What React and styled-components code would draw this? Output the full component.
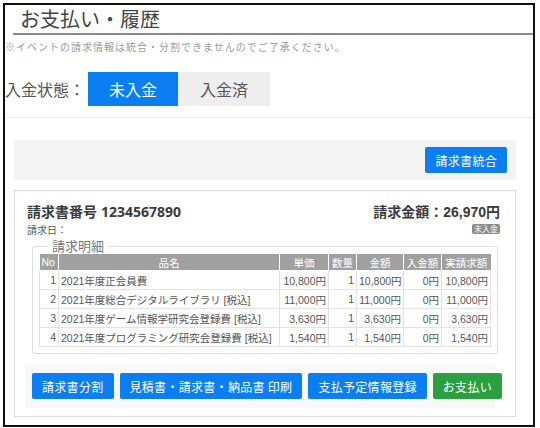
import styled, { createGlobalStyle } from "styled-components";

const GlobalStyle = createGlobalStyle`
  body {
    margin: 0;
    background: #ffffff;
    font-family: "Noto Sans CJK JP", sans-serif;
    color: #444;
  }
`;

const Frame = styled.div`
  margin: 3px 0 0 3px;
  width: 528px;
  border: 2px solid #111;
  background: #fff;
`;

const Title = styled.h1`
  margin: 0 0 0 8px;
  padding-left: 7px;
  height: 28px;
  line-height: 28px;
  font-size: 20px;
  font-weight: 400;
  color: #444;
  border-bottom: 2px solid #8a8a8a;
`;

const Note = styled.p`
  margin: 5px 0 0 0;
  font-size: 10px;
  line-height: 14px;
  letter-spacing: 1px;
  color: #9a9a9a;
`;

const Filter = styled.div`
  display: flex;
  align-items: center;
  margin: 18px 0 0 0;
  padding-bottom: 11px;
  border-bottom: 1px solid #ececec;
`;

const FilterLabel = styled.span`
  font-size: 16px;
  color: #555;
  width: 83px;
  white-space: nowrap;
`;

const Tab = styled.button`
  border: none;
  height: 34px;
  padding: 0;
  width: ${(p) => p.$w}px;
  font-family: inherit;
  font-size: 16px;
  background: ${(p) => (p.$active ? "#0b7ef2" : "#eeeeee")};
  color: ${(p) => (p.$active ? "#fff" : "#555")};
`;

const Content = styled.div`
  padding: 0 17px 0 9px;
`;

const Toolbar = styled.div`
  margin-top: 22px;
  height: 40px;
  background: #f3f3f3;
  display: flex;
  align-items: center;
  justify-content: flex-end;
  padding-right: 9px;
`;

const Button = styled.button`
  border: none;
  border-radius: 2px;
  height: 26px;
  padding: 0 10px;
  font-family: inherit;
  font-size: 12px;
  letter-spacing: 0.3px;
  color: #fff;
  background: ${(p) => (p.$variant === "green" ? "#2a9f3f" : "#0b7ef2")};
  white-space: nowrap;
`;

const Card = styled.div`
  margin: 10px 0 8px 0;
  border: 1px solid #dcdcdc;
  padding: 11px 15px 8px 12px;
`;

const HeadRow = styled.div`
  display: flex;
  justify-content: space-between;
  align-items: center;
  height: 18px;
  font-size: 14px;
  font-weight: 700;
  color: #3a3a3a;
`;

const InvoiceNo = styled.span`
  font-family: "Open Sans", "Noto Sans CJK JP", sans-serif;
  font-weight: 700;
  font-size: 14px;
  margin-left: 4px;
`;

const Amount = styled.span`
  font-family: "Liberation Sans", "Noto Sans CJK JP", sans-serif;
  font-weight: 700;
`;

const SubRow = styled.div`
  display: flex;
  justify-content: space-between;
  align-items: center;
  margin-top: 2px;
  height: 14px;
  font-size: 10px;
  color: #555;
`;

const Badge = styled.span`
  background: #8c8c8c;
  color: #fff;
  font-size: 8px;
  line-height: 10px;
  padding: 0 2px;
  border-radius: 2px;
`;

const Fieldset = styled.fieldset`
  margin: 2px 4px 0 5px;
  padding: 0 6px 6px 6px;
  border: 1px solid #dedede;
  border-radius: 3px;
`;

const Legend = styled.legend`
  margin-left: 9px;
  padding: 0 4px;
  font-size: 13px;
  line-height: 16px;
  color: #777;
`;

const Table = styled.table`
  width: 451px;
  border-collapse: collapse;
  table-layout: fixed;
  font-family: "Liberation Sans", "Noto Sans CJK JP", sans-serif;
  font-size: 10.5px;
  color: #555;
`;

const Th = styled.th`
  background: #a0a0a0;
  color: #fff;
  font-weight: 400;
  height: 16px;
  padding: 0 2px;
  text-align: ${(p) => p.$align || "center"};
  border: 1px solid #fff;
  border-top: none;
  &:first-child {
    border-left: none;
  }
  &:last-child {
    border-right: none;
  }
`;

const Td = styled.td`
  height: 18px;
  padding: 0 2px;
  text-align: ${(p) => p.$align || "right"};
  border: 1px solid #e2e2e2;
  white-space: nowrap;
  overflow: hidden;
`;

const Actions = styled.div`
  margin: 10px 5px 0 -2px;
  padding: 9px 7px;
  background: #f8f8f8;
  display: flex;
  gap: 6px;
`;

const columns = [
  { label: "No", w: 19, align: "left" },
  { label: "品名", w: 221 },
  { label: "単価", w: 49 },
  { label: "数量", w: 28 },
  { label: "金額", w: 47 },
  { label: "入金額", w: 38 },
  { label: "実請求額", w: 49 },
];

const rows = [
  ["1", "2021年度正会員費", "10,800円", "1", "10,800円", "0円", "10,800円"],
  ["2", "2021年度総合デジタルライブラリ [税込]", "11,000円", "1", "11,000円", "0円", "11,000円"],
  ["3", "2021年度ゲーム情報学研究会登録費 [税込]", "3,630円", "1", "3,630円", "0円", "3,630円"],
  ["4", "2021年度プログラミング研究会登録費 [税込]", "1,540円", "1", "1,540円", "0円", "1,540円"],
];

export default function App() {
  return (
    <>
      <GlobalStyle />
      <Frame>
        <Title>お支払い・履歴</Title>
        <Note>※イベントの請求情報は統合・分割できませんのでご了承ください。</Note>
        <Filter>
          <FilterLabel>入金状態：</FilterLabel>
          <Tab $active $w={90}>未入金</Tab>
          <Tab $w={92}>入金済</Tab>
        </Filter>
        <Content>
          <Toolbar>
            <Button>請求書統合</Button>
          </Toolbar>
          <Card>
            <HeadRow>
              <span>
                請求書番号<InvoiceNo>1234567890</InvoiceNo>
              </span>
              <span>
                請求金額：<Amount>26,970</Amount>円
              </span>
            </HeadRow>
            <SubRow>
              <span>請求日：</span>
              <Badge>未入金</Badge>
            </SubRow>
            <Fieldset>
              <Legend>請求明細</Legend>
              <Table>
                <colgroup>
                  {columns.map((c) => (
                    <col key={c.label} style={{ width: c.w }} />
                  ))}
                </colgroup>
                <thead>
                  <tr>
                    {columns.map((c) => (
                      <Th key={c.label} $align={c.align}>
                        {c.label}
                      </Th>
                    ))}
                  </tr>
                </thead>
                <tbody>
                  {rows.map((r) => (
                    <tr key={r[0]}>
                      {r.map((v, i) => (
                        <Td key={i} $align={i === 1 ? "left" : "right"}>
                          {v}
                        </Td>
                      ))}
                    </tr>
                  ))}
                </tbody>
              </Table>
            </Fieldset>
            <Actions>
              <Button>請求書分割</Button>
              <Button>見積書・請求書・納品書 印刷</Button>
              <Button>支払予定情報登録</Button>
              <Button $variant="green">お支払い</Button>
            </Actions>
          </Card>
        </Content>
      </Frame>
    </>
  );
}
